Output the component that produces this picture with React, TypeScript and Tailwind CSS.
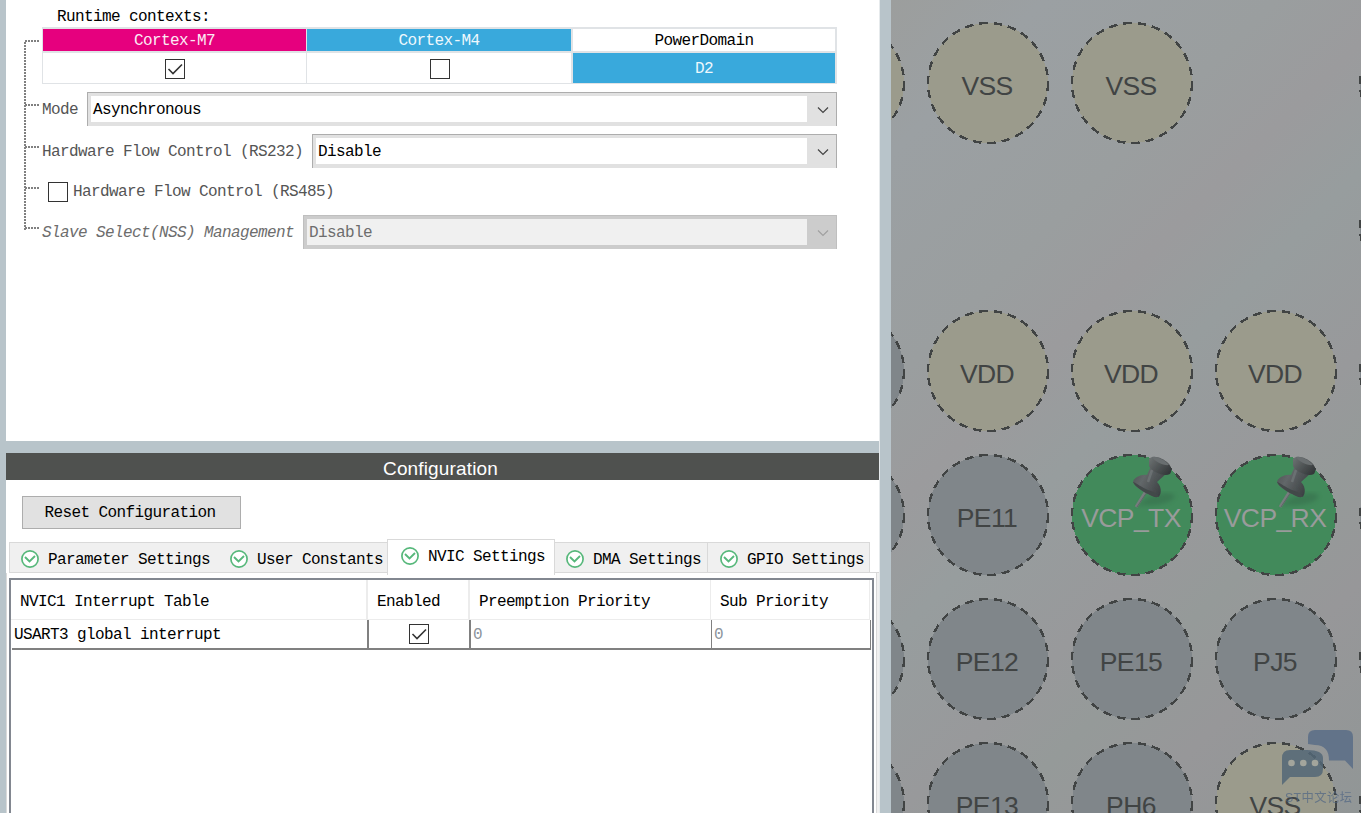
import type { ReactNode } from 'react';

type PinKind = 'power' | 'io' | 'assigned';

interface Pin {
  x: number;
  y: number;
  label?: string;
  kind: PinKind;
}

const PIN_FILL: Record<PinKind, string> = {
  power: '#9b9b8c',
  io: '#80868a',
  assigned: '#428a5b',
};

// Ball centres, relative to the top left corner of the package view
const pins: Pin[] = [
  { x: -47, y: 83, kind: 'power' },
  { x: 97, y: 83, label: 'VSS', kind: 'power' },
  { x: 241, y: 83, label: 'VSS', kind: 'power' },
  { x: 529, y: 83, kind: 'io' },
  { x: 529, y: 227, kind: 'io' },
  { x: -47, y: 371, kind: 'io' },
  { x: 97, y: 371, label: 'VDD', kind: 'power' },
  { x: 241, y: 371, label: 'VDD', kind: 'power' },
  { x: 385, y: 371, label: 'VDD', kind: 'power' },
  { x: 529, y: 371, kind: 'io' },
  { x: -47, y: 515, kind: 'io' },
  { x: 97, y: 515, label: 'PE11', kind: 'io' },
  { x: 241, y: 515, label: 'VCP_TX', kind: 'assigned' },
  { x: 385, y: 515, label: 'VCP_RX', kind: 'assigned' },
  { x: 529, y: 515, kind: 'io' },
  { x: -47, y: 659, kind: 'io' },
  { x: 97, y: 659, label: 'PE12', kind: 'io' },
  { x: 241, y: 659, label: 'PE15', kind: 'io' },
  { x: 385, y: 659, label: 'PJ5', kind: 'io' },
  { x: 529, y: 659, kind: 'io' },
  { x: -47, y: 803, kind: 'io' },
  { x: 97, y: 803, label: 'PE13', kind: 'io' },
  { x: 241, y: 803, label: 'PH6', kind: 'io' },
  { x: 385, y: 803, label: 'VSS', kind: 'power' },
  { x: 529, y: 803, kind: 'io' },
];

function Checkbox({ checked = false }: { checked?: boolean }) {
  return (
    <span className="flex h-5 w-5 shrink-0 items-center justify-center border border-[#333] bg-white">
      {checked && (
        <svg width="18" height="18" viewBox="0 0 18 18" fill="none" stroke="#333" strokeWidth="1.6">
          <path d="M2.5 9 L7 13.5 L16 4.5" />
        </svg>
      )}
    </span>
  );
}

function ComboBox({ value, disabled = false }: { value: string; disabled?: boolean }) {
  return (
    <div
      className={`flex h-[34px] flex-1 border border-b-0 pt-[3px] pb-1 pl-[3px] ${
        disabled ? 'border-[#bfbfbf] bg-[#ccc] text-[#6d6d6d]' : 'border-[#adadad] bg-[#e1e1e1] text-black'
      }`}
    >
      <div className={`flex flex-1 items-center pt-[2px] pl-[2px] ${disabled ? 'bg-[#f0f0f0]' : 'bg-white'}`}>{value}</div>
      <div className="flex w-[29px] items-center justify-center pt-px pl-[3px]">
        <svg width="12" height="8" viewBox="0 0 12 8" fill="none" stroke={disabled ? '#a0a0a0' : '#444'} strokeWidth="1.2">
          <path d="M1 1.5 L6 6.5 L11 1.5" />
        </svg>
      </div>
    </div>
  );
}

function TreeLines() {
  return (
    <svg
      className="mt-10 shrink-0"
      width="18"
      height="190"
      viewBox="0 0 18 190"
      stroke="#808080"
      strokeWidth="2"
      strokeDasharray="2 1"
      shapeRendering="crispEdges"
    >
      <path d="M1 2 V190" />
      {[1, 65, 107, 148, 188].map((y) => (
        <path key={y} d={`M1 ${y} H15`} />
      ))}
    </svg>
  );
}

function ContextTable() {
  return (
    <div className="grid h-[57px] grid-cols-[263px_1px_264px_2px_262px] grid-rows-[22px_2px_30px] bg-[#e0e3e6] pt-[2px] pr-[2px] pb-px pl-px">
      <div className="flex items-center justify-center bg-[#e6007e] pt-[2px] text-[#fbeaf4]">Cortex-M7</div>
      <div />
      <div className="flex items-center justify-center bg-[#39a9dc] pt-[2px] text-[#eef8fd]">Cortex-M4</div>
      <div />
      <div className="flex items-center justify-center bg-white pt-[2px]">PowerDomain</div>
      <div className="col-span-5" />
      <div className="flex items-center justify-center bg-white pt-px">
        <Checkbox checked />
      </div>
      <div />
      <div className="flex items-center justify-center bg-white pt-px pl-px">
        <Checkbox />
      </div>
      <div />
      <div className="flex items-center justify-center bg-[#39a9dc] pt-[2px] text-[#eef8fd]">D2</div>
    </div>
  );
}

function ModePanel() {
  return (
    <section className="flex h-[441px] bg-white pl-[18px]">
      <TreeLines />
      <div className="flex w-[795px] flex-col text-[#555]">
        <div className="flex h-[27px] items-center pt-[7px] pl-[15px] text-black">Runtime contexts:</div>
        <div className="text-black">
          <ContextTable />
        </div>
        <div className="mt-2 flex items-center gap-[9px]">
          <span className="pt-[2px]">Mode</span>
          <ComboBox value="Asynchronous" />
        </div>
        <div className="mt-2 flex items-center gap-[9px]">
          <span className="pt-[2px]">Hardware Flow Control (RS232)</span>
          <ComboBox value="Disable" />
        </div>
        <div className="mt-[14px] flex h-5 items-center gap-[5px] pl-[6px]">
          <Checkbox />
          <span>Hardware Flow Control (RS485)</span>
        </div>
        <div className="mt-[13px] flex items-center gap-[9px]">
          <span className="pt-[2px] text-[#6d6d6d] italic">Slave Select(NSS) Management</span>
          <ComboBox value="Disable" disabled />
        </div>
      </div>
    </section>
  );
}

function StatusIcon() {
  return (
    <svg className="shrink-0" width="18" height="18" viewBox="0 0 18 18" fill="none" stroke="#57b87b">
      <circle cx="9" cy="9" r="8.1" fill="#fff" strokeWidth="1.7" />
      <path d="M4 7 L8.5 11.5 L14 6" strokeWidth="1.9" />
    </svg>
  );
}

function Tab({ className, active = false, children }: { className: string; active?: boolean; children: ReactNode }) {
  return (
    <div
      className={`flex shrink-0 items-center gap-[9px] border-t border-[#d9d9d9] ${
        active ? 'h-9 border-x bg-white pr-2 pb-[3px] pl-[13px]' : 'h-[31px] border-b bg-[#f0f0f0] pt-[3px]'
      } ${className}`}
    >
      <StatusIcon />
      <span className={active ? 'pt-px' : 'pt-[2px]'}>{children}</span>
    </div>
  );
}

function InterruptTable() {
  return (
    <div className="h-[235px] w-[865px] border-2 border-b-0 border-[#828790] bg-white">
      <div className="flex h-10 w-[859px] border-b border-[#ececec]">
        <div className="flex w-[357px] items-center border-r-2 border-[#ececec] pt-[5px] pl-[9px]">NVIC1 Interrupt Table</div>
        <div className="flex w-[102px] items-center border-r-2 border-[#ececec] pt-[5px] pl-[9px]">Enabled</div>
        <div className="flex w-[241px] items-center border-r border-[#ececec] pt-[5px] pl-[9px]">Preemption Priority</div>
        <div className="flex flex-1 items-center border-r border-[#ececec] pt-[5px] pl-[9px]">Sub Priority</div>
      </div>
      <div className="ml-px flex h-[30px] w-[859px] border-b-2 border-[#808080]">
        <div className="flex w-[357px] items-center border-r-2 border-[#808080] pt-[2px] pl-[2px]">USART3 global interrupt</div>
        <div className="flex w-[102px] items-center justify-center border-r-2 border-[#808080]">
          <Checkbox checked />
        </div>
        <div className="flex w-[241px] items-center border-r border-[#808080] pt-[2px] pl-[2px] text-[#8c949c]">0</div>
        <div className="flex flex-1 items-center border-r border-[#808080] pt-[2px] pl-[2px] text-[#8c949c]">0</div>
      </div>
    </div>
  );
}

function ConfigurationPanel() {
  return (
    <section className="mt-3 flex h-[360px] flex-col bg-white">
      <header className="flex h-[27px] items-center justify-center bg-[#4f514f] pt-1 pr-1 font-['Liberation_Sans',sans-serif] text-[19px] tracking-[0.15px] text-white">
        Configuration
      </header>
      <button className="mt-4 ml-4 h-[33px] w-[219px] border border-[#adadad] bg-[#e1e1e1] pr-[3px] text-center">
        Reset Configuration
      </button>
      <div className="mt-[10px] flex h-[34px] items-end pl-[3px]">
        <Tab className="w-[209px] border-l pl-[11px]">Parameter Settings</Tab>
        <Tab className="w-[169px] pl-3">User Constants</Tab>
        <Tab active className="relative -mb-[2px] w-[168px]">
          NVIC Settings
        </Tab>
        <Tab className="w-[153px] border-r pl-[11px]">DMA Settings</Tab>
        <Tab className="w-[162px] border-r pl-3">GPIO Settings</Tab>
        <div className="flex-1 border-b border-[#d9d9d9]" />
      </div>
      <div className="flex flex-1 bg-[#f0f0f0]">
        <div className="w-[871px] border-r border-l border-[#d9d9d9] bg-white pt-[5px] pl-[2px]">
          <InterruptTable />
        </div>
      </div>
    </section>
  );
}

function PushPin({ x, y }: { x: number; y: number }) {
  return (
    <g transform={`translate(${x} ${y})`}>
      <path d="M5 -8 C14 -20 35 -25 42 -20 C46 -14 25 -8 12 -10 Z" fill="#2f5c42" opacity="0.35" filter="url(#shadow)" />
      <g filter="url(#soft)">
        <path d="M14 -24 L4 -8" stroke="#777d7e" strokeWidth="3" />
        <path d="M15 -23 L5 -8" stroke="#5c6465" strokeWidth="1" />
        <path
          d="M19 -49 L15 -40 C10 -41 2 -38 1 -33 C3 -28 9 -25 16 -21 C21 -18 26 -16 28 -20 C30 -25 28 -30 25 -33 L35 -42 Z"
          fill="url(#pinBody)"
        />
        <path d="M1 -33 C5 -32 10 -27 16 -25 C22 -23 26 -21 27 -18 C20 -18 4 -26 1 -33" fill="#43484a" />
        <path d="M17 -56 C21 -61 31 -57 36 -52 C40 -48 40 -44 38 -41 C32 -38 20 -43 17 -49 Z" fill="url(#pinHead)" />
        <path d="M20 -58 C25 -59 33 -55 37 -50 C32 -49 23 -53 20 -58" fill="#696e6f" />
        <path d="M20 -45 L16 -33" stroke="#777c7e" strokeWidth="2.5" opacity="0.6" />
      </g>
    </g>
  );
}

function Watermark() {
  return (
    <g>
      <path d="M417 744 V737 Q417 730 424 730 H455 Q462 730 462 737 V769 L454 760.5 H438 Q438 745 424 745 Z" fill="#4f6584" opacity="0.72" />
      <path
        d="M399 750 H416 Q432 750 432 758 V769 Q432 777 424 777 H399 L391 785 V758 Q391 750 399 750 Z"
        fill="#536777"
        opacity="0.85"
      />
      {[400.5, 412.3, 424].map((cx) => (
        <circle key={cx} cx={cx} cy="763" r="3.3" fill="#a3a59c" />
      ))}
      <text
        x="394"
        y="802"
        fontSize="12.3"
        textLength="67"
        fill="#4f6584"
        opacity="0.7"
        className="font-['Liberation_Sans','Noto_Sans_CJK_SC',sans-serif]"
      >
        ST中文论坛
      </text>
    </g>
  );
}

function PackageView() {
  return (
    <svg className="h-[813px] w-[470px] shrink-0" viewBox="0 0 470 813">
      <defs>
        <linearGradient id="chip" gradientUnits="userSpaceOnUse" x1="0" y1="0" x2="640" y2="640">
          <stop offset="0" stopColor="#9c9e9d" />
          <stop offset="0.12" stopColor="#9ba0a3" />
          <stop offset="0.3" stopColor="#9a9e9f" />
          <stop offset="0.4" stopColor="#9b9b9d" />
          <stop offset="0.5" stopColor="#979d9e" />
          <stop offset="0.64" stopColor="#98999b" />
          <stop offset="0.72" stopColor="#959a99" />
          <stop offset="0.82" stopColor="#979799" />
          <stop offset="1" stopColor="#919696" />
        </linearGradient>
        <linearGradient id="pinBody" x1="0" y1="0" x2="1" y2="0.5">
          <stop offset="0" stopColor="#4b5052" />
          <stop offset="0.4" stopColor="#626769" />
          <stop offset="1" stopColor="#3c4143" />
        </linearGradient>
        <linearGradient id="pinHead" x1="0" y1="0" x2="1" y2="0.7">
          <stop offset="0" stopColor="#6f7475" />
          <stop offset="1" stopColor="#35393b" />
        </linearGradient>
        <filter id="shadow">
          <feGaussianBlur stdDeviation="2" />
        </filter>
        <filter id="soft">
          <feGaussianBlur stdDeviation="0.6" />
        </filter>
      </defs>
      <rect width="470" height="813" fill="url(#chip)" />
      {pins.map((pin) => (
        <g key={`${pin.x}-${pin.y}`}>
          <circle
            cx={pin.x}
            cy={pin.y}
            r="60"
            fill={PIN_FILL[pin.kind]}
            stroke="#414444"
            strokeWidth="2.4"
            strokeDasharray="8.4 6"
            shapeRendering="crispEdges"
          />
          {pin.kind === 'assigned' && <PushPin x={pin.x} y={pin.y} />}
          {pin.label && (
            <text
              x={pin.x - 1}
              y={pin.y + 11.7}
              textAnchor="middle"
              fontSize="26.5"
              letterSpacing="-0.6"
              fill={pin.kind === 'assigned' ? '#999b9b' : '#414444'}
              className="font-['Liberation_Sans',sans-serif]"
            >
              {pin.label}
            </text>
          )}
        </g>
      ))}
      <Watermark />
    </svg>
  );
}

function App() {
  return (
    <div className="flex h-[813px] w-[1361px] overflow-hidden bg-[#b8c4ca] font-['Liberation_Mono',monospace] text-[16px] leading-5 tracking-[-0.6px] whitespace-nowrap text-black">
      <div className="ml-[6px] w-[873px] shrink-0">
        <ModePanel />
        <ConfigurationPanel />
      </div>
      <div className="mr-[11px] w-px shrink-0 bg-[#e6eaec]" />
      <div className="tracking-normal">
        <PackageView />
      </div>
    </div>
  );
}

export default App;
